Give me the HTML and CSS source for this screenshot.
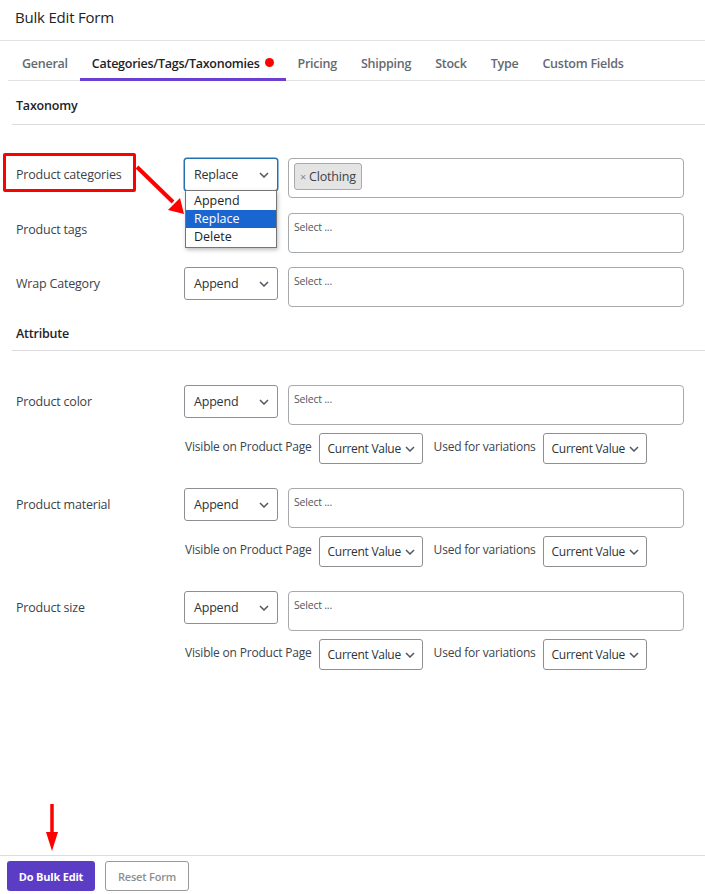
FILE: index.html
```html
<!DOCTYPE html>
<html lang="en">
<head>
<meta charset="utf-8">
<title>Bulk Edit Form</title>
<link rel="stylesheet" href="styles.css">
</head>
<body>
<div class="page">
  <header class="header"><h1 class="title">Bulk Edit Form</h1></header>
  <nav class="tabs">
    <span class="tab">General</span>
    <span class="tab active">Categories/Tags/Taxonomies<span class="dot"></span></span>
    <span class="tab">Pricing</span>
    <span class="tab">Shipping</span>
    <span class="tab">Stock</span>
    <span class="tab">Type</span>
    <span class="tab">Custom Fields</span>
  </nav>

  <main class="content">
    <h2 class="section-title">Taxonomy</h2>
    <div class="rows tax-rows">
      <div class="row">
        <div class="label annotated">Product categories<span class="red-box"></span></div>
        <div class="select-wrap">
          <div class="select focused"><span>Replace</span><svg class="chev" viewBox="0 0 10 6"><path d="M1 1l4 4 4-4"/></svg></div>
          <ul class="dropdown">
            <li>Append</li>
            <li class="hl">Replace</li>
            <li>Delete</li>
          </ul>
        </div>
        <div class="multi"><span class="chip"><span class="x">×</span>Clothing</span></div>
      </div>
      <div class="row">
        <div class="label">Product tags</div>
        <div class="select-wrap"><div class="select covered"><span>Append</span><svg class="chev" viewBox="0 0 10 6"><path d="M1 1l4 4 4-4"/></svg></div></div>
        <div class="multi"><span class="ph">Select ...</span></div>
      </div>
      <div class="row">
        <div class="label">Wrap Category</div>
        <div class="select-wrap"><div class="select"><span>Append</span><svg class="chev" viewBox="0 0 10 6"><path d="M1 1l4 4 4-4"/></svg></div></div>
        <div class="multi"><span class="ph">Select ...</span></div>
      </div>
    </div>

    <h2 class="section-title attr">Attribute</h2>
    <div class="rows attr-rows">
      <div class="attr-block">
        <div class="row">
          <div class="label">Product color</div>
          <div class="select-wrap"><div class="select"><span>Append</span><svg class="chev" viewBox="0 0 10 6"><path d="M1 1l4 4 4-4"/></svg></div></div>
          <div class="multi"><span class="ph">Select ...</span></div>
        </div>
        <div class="sub-row">
          <span class="sub-label">Visible on Product Page</span>
          <div class="select small"><span>Current Value</span><svg class="chev" viewBox="0 0 10 6"><path d="M1 1l4 4 4-4"/></svg></div>
          <span class="sub-label">Used for variations</span>
          <div class="select small"><span>Current Value</span><svg class="chev" viewBox="0 0 10 6"><path d="M1 1l4 4 4-4"/></svg></div>
        </div>
      </div>
      <div class="attr-block">
        <div class="row">
          <div class="label">Product material</div>
          <div class="select-wrap"><div class="select"><span>Append</span><svg class="chev" viewBox="0 0 10 6"><path d="M1 1l4 4 4-4"/></svg></div></div>
          <div class="multi"><span class="ph">Select ...</span></div>
        </div>
        <div class="sub-row">
          <span class="sub-label">Visible on Product Page</span>
          <div class="select small"><span>Current Value</span><svg class="chev" viewBox="0 0 10 6"><path d="M1 1l4 4 4-4"/></svg></div>
          <span class="sub-label">Used for variations</span>
          <div class="select small"><span>Current Value</span><svg class="chev" viewBox="0 0 10 6"><path d="M1 1l4 4 4-4"/></svg></div>
        </div>
      </div>
      <div class="attr-block">
        <div class="row">
          <div class="label">Product size</div>
          <div class="select-wrap"><div class="select"><span>Append</span><svg class="chev" viewBox="0 0 10 6"><path d="M1 1l4 4 4-4"/></svg></div></div>
          <div class="multi"><span class="ph">Select ...</span></div>
        </div>
        <div class="sub-row">
          <span class="sub-label">Visible on Product Page</span>
          <div class="select small"><span>Current Value</span><svg class="chev" viewBox="0 0 10 6"><path d="M1 1l4 4 4-4"/></svg></div>
          <span class="sub-label">Used for variations</span>
          <div class="select small"><span>Current Value</span><svg class="chev" viewBox="0 0 10 6"><path d="M1 1l4 4 4-4"/></svg></div>
        </div>
      </div>
    </div>
  </main>

  <footer class="footer">
    <button class="btn primary">Do Bulk Edit</button>
    <button class="btn secondary">Reset Form</button>
  </footer>

  <svg class="arrow arrow-diag" viewBox="0 0 60 60" width="60" height="60">
    <line x1="2" y1="2" x2="38" y2="37" stroke="#f00" stroke-width="4"/>
    <polygon points="49,49 33,45 45,33" fill="#f00"/>
  </svg>
  <svg class="arrow arrow-down" viewBox="0 0 16 50" width="16" height="50">
    <line x1="8" y1="0" x2="8" y2="32" stroke="#f00" stroke-width="3.5"/>
    <polygon points="2,28 14,28 8,47" fill="#f00"/>
  </svg>
</div>
</body>
</html>
```

FILE: styles.css
```css
* { box-sizing: border-box; }
html, body { margin: 0; padding: 0; background: #fff; }
body {
  font-family: "Open Sans", "Noto Sans", sans-serif;
  color: #3c434a;
  font-size: 12px;
}
.page {
  position: relative;
  min-height: 894px;
  display: flex;
  flex-direction: column;
}
.header {
  height: 41px;
  border-bottom: 1px solid #e2e2e2;
  padding: 0 15px;
  display: flex;
  align-items: center;
}
.title {
  margin: 0;
  font-size: 15px;
  font-weight: 500;
  color: #1d2327;
  letter-spacing: -0.2px;
  position: relative;
  top: -3px;
}
.tabs {
  margin-left: 8px;
  padding-left: 2px;
  display: flex;
  height: 40px;
  border-bottom: 1px solid #e2e2e2;
}
.tab {
  padding: 7px 12px 0;
  display: flex;
  align-items: center;
  font-size: 12.5px;
  font-weight: 600;
  color: #646970;
  letter-spacing: -0.25px;
  border-bottom: 3px solid transparent;
  margin-bottom: -1px;
  white-space: nowrap;
}
.tab.active {
  color: #1d2327;
  border-bottom-color: #6a3fd1;
}
.dot {
  width: 9px;
  height: 9px;
  border-radius: 50%;
  background: #f00;
  margin-left: 5px;
  position: relative;
  top: -1px;
}
.content {
  padding-left: 12px;
}
.section-title {
  margin: 0;
  font-size: 12.5px;
  font-weight: 600;
  color: #1d2327;
  letter-spacing: -0.2px;
  padding: 16px 0 0 4px;
  height: 44px;
  border-bottom: 1px solid #dcdcde;
}
.section-title.attr {
  padding-top: 18px;
  height: 44px;
}
.rows {
  padding: 33px 21px 26px 4px;
  display: flex;
  flex-direction: column;
}
.tax-rows { gap: 14.5px; padding-bottom: 0; }
.attr-rows { gap: 24px; padding-top: 34px; }
.row {
  display: flex;
  align-items: flex-start;
}
.label {
  width: 168px;
  flex: none;
  padding-top: 8px;
  font-size: 12.5px;
  color: #3c434a;
  letter-spacing: -0.2px;
  position: relative;
}
.red-box {
  position: absolute;
  left: -13px;
  top: -5px;
  width: 133px;
  height: 39px;
  border: 3px solid #f00;
  border-radius: 2px;
}
.select-wrap {
  position: relative;
  flex: none;
}
.select {
  width: 94px;
  height: 33px;
  border: 1px solid #8c8f94;
  border-radius: 3px;
  display: flex;
  align-items: center;
  justify-content: space-between;
  padding: 0 8px 0 9px;
  font-size: 12.5px;
  color: #2c3338;
  letter-spacing: -0.2px;
  background: #fff;
  white-space: nowrap;
}
.select.covered {
  visibility: hidden;
}
.select.focused {
  border-color: #2271b1;
  box-shadow: 0 0 0 0.5px #2271b1;
}
.chev {
  width: 10px;
  height: 6px;
  flex: none;
  fill: none;
  stroke: #50575e;
  stroke-width: 1.5;
}
.dropdown {
  position: absolute;
  left: 1px;
  top: 32px;
  width: 92px;
  margin: 0;
  padding: 1px 0;
  list-style: none;
  background: #fff;
  border: 1px solid #767676;
  box-shadow: 1px 2px 4px rgba(0,0,0,0.25);
  z-index: 5;
}
.dropdown li {
  height: 18px;
  line-height: 18px;
  padding-left: 8px;
  font-size: 12.5px;
  color: #1d2327;
}
.dropdown li.hl {
  background: #1a66d1;
  color: #fff;
}
.multi {
  flex: 1;
  margin-left: 10px;
  height: 40px;
  border: 1px solid #a7aaad;
  border-radius: 4px;
  padding: 4px 5px;
}
.ph {
  font-size: 10.5px;
  color: #50575e;
  letter-spacing: -0.2px;
  display: block;
  padding-top: 2px;
}
.chip {
  display: inline-flex;
  align-items: center;
  height: 27px;
  padding: 0 5px;
  background: #e4e4e4;
  border: 1px solid #aaa;
  border-radius: 3px;
  font-size: 12.5px;
  color: #3c434a;
  letter-spacing: -0.2px;
}
.chip .x {
  color: #888;
  font-size: 11px;
  margin-right: 3px;
}
.sub-row {
  display: flex;
  align-items: center;
  padding-left: 169px;
  margin-top: 8px;
}
.sub-label {
  font-size: 12px;
  color: #3c434a;
  letter-spacing: -0.2px;
  margin-right: 7px;
  position: relative;
  top: -2px;
  white-space: nowrap;
}
.select.small {
  width: 104px;
  height: 31px;
  padding: 0 7px 0 8px;
  margin-right: 11px;
  font-size: 12px;
  letter-spacing: -0.3px;
}
.footer {
  margin-top: auto;
  border-top: 1px solid #dcdcde;
  padding: 5px 7px 3px;
  display: flex;
  gap: 10px;
}
.btn {
  height: 30px;
  border-radius: 3px;
  font-family: inherit;
  font-size: 11px;
  font-weight: 700;
  letter-spacing: -0.2px;
  padding: 0;
}
.btn.primary {
  width: 88px;
  background: #5b3cc4;
  border: none;
  color: #fff;
}
.btn.secondary {
  width: 84px;
  background: #fff;
  border: 1px solid #999;
  color: #8c8f94;
  font-weight: 600;
}
.arrow {
  position: absolute;
  pointer-events: none;
}
.arrow-diag { left: 135px; top: 165px; }
.arrow-down { left: 44px; top: 804px; }
```
